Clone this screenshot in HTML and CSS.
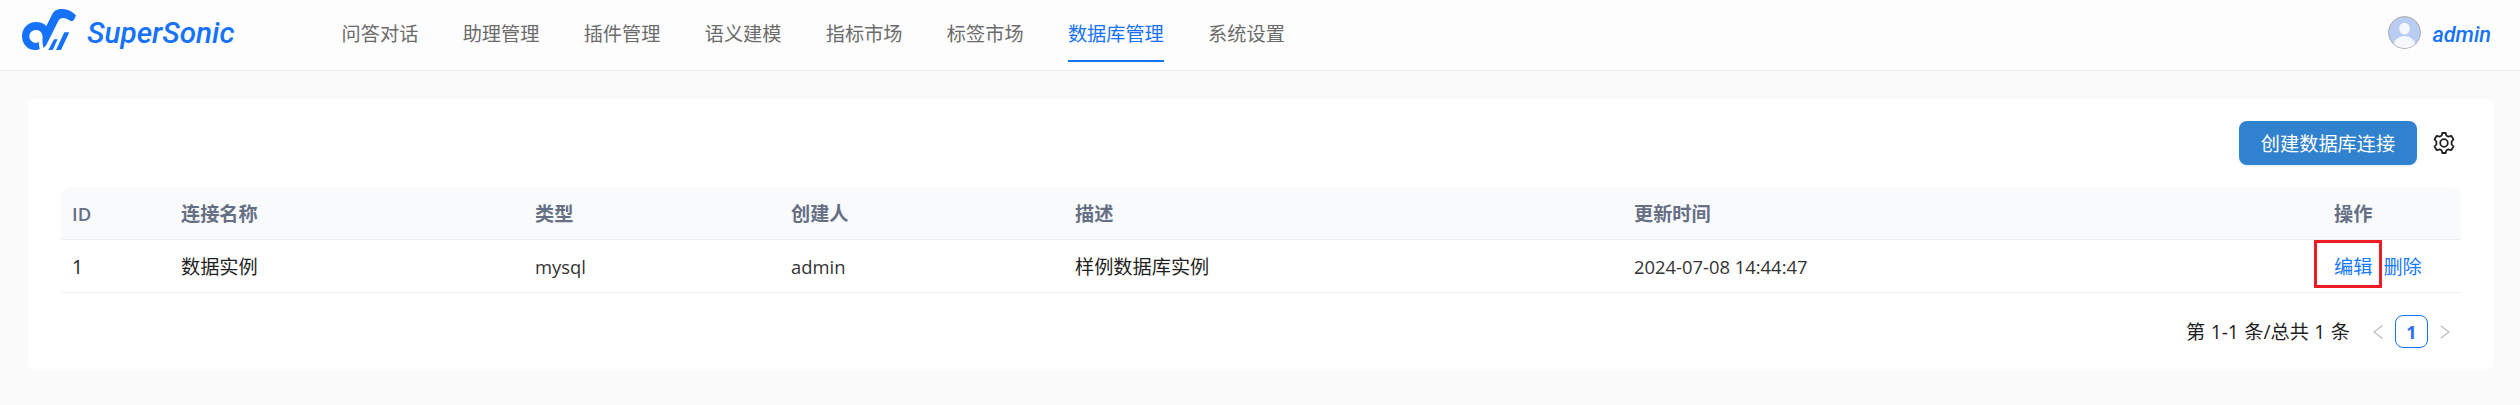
FILE: index.html
```
<!DOCTYPE html>
<html lang="zh-CN">
<head>
<meta charset="utf-8">
<title>SuperSonic</title>
<link rel="stylesheet" href="styles.css">
</head>
<body>
<header class="header">
  <div class="brand">
    <svg class="logo" viewBox="66 27 162 123">
      <path class="blue" d="M119 148 C87 157 66 135 66 109 C66 83 85 66 108 66 C121 66 130 69 139 78 L156 44 C162 30 174 26 190 27 C206 28 218 36 228 46 L223 58 C220 64 214 65 208 61 C198 55 192 53 184 55 C178 57 176 61 173 67 L139 135 L131 144 C127 133 127 121 128 110 C127 98 119 90 108 90 C97 90 88 98 88 109 C88 121 98 129 108 129 L116 126 Z"/>
      <path class="blue" d="M145 150 L162 118 H173 L158 150 Z M168 150 L193 97 H208 L183 150 Z"/>
    </svg>
    <span class="brand-name">SuperSonic</span>
  </div>
  <nav class="nav">
    <a class="nav-item">问答对话</a>
    <a class="nav-item">助理管理</a>
    <a class="nav-item">插件管理</a>
    <a class="nav-item">语义建模</a>
    <a class="nav-item">指标市场</a>
    <a class="nav-item">标签市场</a>
    <a class="nav-item active">数据库管理</a>
    <a class="nav-item">系统设置</a>
  </nav>
  <div class="user">
    <svg class="avatar" viewBox="0 0 33 33">
      <defs><clipPath id="face"><circle cx="16.5" cy="16.5" r="15.5"/></clipPath></defs>
      <circle class="avatar-bg" cx="16.5" cy="16.5" r="16"/>
      <g class="person" clip-path="url(#face)"><ellipse cx="16.5" cy="12.7" rx="5.3" ry="5.9"/><ellipse cx="16.5" cy="30" rx="11" ry="10"/></g>
    </svg>
    <span class="user-name">admin</span>
  </div>
</header>
<main class="card">
  <div class="toolbar">
    <button class="create">创建数据库连接</button>
    <svg class="gear" viewBox="0 0 22 22">
      <path d="M8.7 3.5 L9.3 1 H12.7 L13.3 3.5 L15.3 4.7 L18.2 3.8 L20.5 7.5 L18.6 9.5 V12.5 L20.5 14.5 L18.2 18.2 L15.3 17.3 L13.3 18.5 L12.7 21 H9.3 L8.7 18.5 L6.7 17.3 L3.8 18.2 L1.5 14.5 L3.4 12.5 V9.5 L1.5 7.5 L3.8 3.8 L6.7 4.7 Z"/>
      <circle cx="11" cy="11" r="3.8"/>
    </svg>
  </div>
  <div class="table">
    <div class="row head">
      <span class="latin-head">ID</span><span>连接名称</span><span>类型</span><span>创建人</span><span>描述</span><span>更新时间</span><span>操作</span>
    </div>
    <div class="row">
      <span>1</span><span>数据实例</span><span class="latin">mysql</span><span class="latin">admin</span><span>样例数据库实例</span><span class="latin">2024-07-08 14:44:47</span>
      <span class="actions"><a class="edit">编辑</a><a>删除</a></span>
    </div>
  </div>
  <div class="pager">
    <span class="total">第 1-1 条/总共 1 条</span>
    <svg class="arrow" viewBox="0 0 10 14"><path d="M9.3 .7 L1 7 L9.3 13.3"/></svg>
    <span class="page">1</span>
    <svg class="arrow" viewBox="0 0 10 14"><path d="M.7 .7 L9 7 L.7 13.3"/></svg>
  </div>
</main>
</body>
</html>
```
FILE: styles.css
```
*, *::after { box-sizing: border-box; }
body {
  margin: 0;
  height: 405px;
  overflow: hidden;
  background: #fafafa;
  color: #1f1f1f;
  font: 400 19.2px/30px "Noto Sans CJK SC", sans-serif;
}
.header {
  display: flex;
  height: 71px;
  padding-left: 22px;
  border-bottom: 1px solid #ebebeb;
  background: #fdfdfd;
}
.brand { display: flex; width: 319.6px; flex: none; }
.logo { width: 54px; height: 41px; margin-top: 9px; }
.blue { fill: #1672fa; }
.brand-name {
  margin: 15px 0 0 11px;
  color: #1672fa;
  font: italic 500 29.7px/36px Roboto, sans-serif;
}
.nav { display: flex; gap: 44.3px; }
.nav-item { height: 62px; padding-top: 18px; color: #6b6b6b; white-space: nowrap; }
.nav-item.active { color: #1672fa; border-bottom: 2px solid #1672fa; }
.user { display: flex; margin-left: auto; padding-right: 29px; }
.avatar { width: 33px; height: 33px; margin-top: 16px; }
.avatar-bg { fill: #b9cdf3; stroke: #aaa; }
.person { fill: #f5f8fe; }
.user-name {
  margin: 20px 0 0 11px;
  color: #1672fa;
  font: italic 500 21.7px/30px Roboto, sans-serif;
}
.card {
  height: 271px;
  margin: 28px 26px 0 28px;
  padding: 22px 33px 0;
  border-radius: 8px;
  background: #fff;
}
.toolbar { display: flex; justify-content: flex-end; align-items: center; height: 44px; padding-right: 6px; gap: 16px; }
.create {
  width: 178px;
  height: 44px;
  padding: 0;
  border: 0;
  border-radius: 8px;
  background: #3182ce;
  box-shadow: 0 2px 0 #edf6ff;
  color: #fff;
  font: 400 19.2px/42px "Noto Sans CJK SC", sans-serif;
}
.gear { width: 22px; height: 22px; fill: none; stroke: #222; stroke-width: 1.8; stroke-linejoin: round; }
.table { margin-top: 22px; }
.row {
  display: grid;
  grid-template-columns: 109px 354px 256px 284px 559px 700px 1fr;
  align-items: center;
  height: 53px;
  padding: 2px 0 0 11px;
  border-bottom: 1px solid #efeff1;
  font-family: "Open Sans", "Noto Sans CJK SC", sans-serif;
}
.row > span { white-space: nowrap; }
.head { border-radius: 10px 10px 0 0; background: #f9fafc; color: #667085; font-weight: 700; }
.head .latin-head { font-size: 18.5px; font-weight: 600; }
.latin { font-size: 18.4px; color: #333; }
.actions { display: flex; gap: 11px; color: #1677ff; }
.edit { position: relative; }
.edit::after {
  content: "";
  position: absolute;
  left: -20px;
  top: -12px;
  width: 68px;
  height: 48px;
  border: 3px solid #ed1c24;
}
.pager { display: flex; align-items: center; height: 33px; margin-top: 22px; padding-right: 11px; justify-content: flex-end; }
.total { margin-right: 23px; word-spacing: .5px; font-family: "Open Sans", "Noto Sans CJK SC", sans-serif; }
.arrow { width: 10px; height: 14px; fill: none; stroke: #bdbdbd; stroke-width: 1.3; }
.page {
  width: 33px;
  height: 33px;
  margin: 0 12px;
  border: 1px solid #1672fa;
  border-radius: 8px;
  color: #2f6df6;
  font: 700 18px/33px "Open Sans", sans-serif;
  text-align: center;
}
```
